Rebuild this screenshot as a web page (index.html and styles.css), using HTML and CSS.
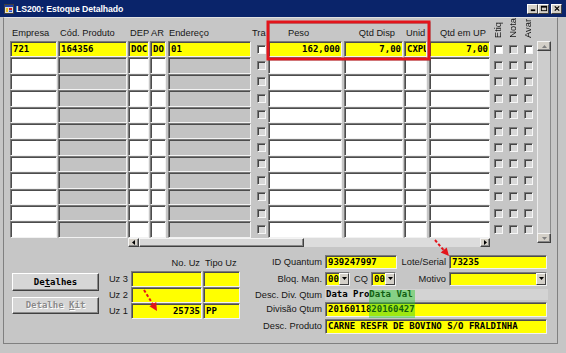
FILE: index.html
```html
<!DOCTYPE html>
<html lang="pt">
<head>
<meta charset="utf-8">
<title>LS200: Estoque Detalhado</title>
<link rel="stylesheet" href="styles.css">
</head>
<body>
<div class="win">
  <div class="titlebar">
    <svg class="ticon" viewBox="0 0 10 10"><rect x="0.5" y="0.5" width="9" height="9" fill="#dcdcdc" stroke="#404040"/><rect x="1" y="1" width="8" height="2" fill="#1e3ea8"/><rect x="2" y="4" width="2" height="4" fill="#e8c020"/><rect x="5" y="4" width="3" height="2" fill="#d02020"/><rect x="5" y="6.5" width="3" height="1.5" fill="#2050d0"/></svg>
    <span class="ttext">LS200: Estoque Detalhado</span>
    <div class="tbtns">
      <span class="tb"><svg viewBox="0 0 9 8" width="9" height="8"><rect x="2" y="5" width="5" height="2" fill="#000"/></svg></span>
      <span class="tb"><svg viewBox="0 0 9 8" width="9" height="8"><rect x="1.5" y="1.5" width="6" height="5" fill="none" stroke="#000"/><rect x="1" y="1" width="7" height="2" fill="#000"/></svg></span>
      <span class="tb close"><svg viewBox="0 0 9 8" width="9" height="8"><path d="M2 1.5l5 5M7 1.5l-5 5" stroke="#000" stroke-width="1.4"/></svg></span>
    </div>
  </div>

  <div class="client">
    <div class="top">
      <div class="table">
        <div class="hdr">
          <span class="h c-emp">Empresa</span>
          <span class="h c-cod">Cód. Produto</span>
          <span class="h c-dep">DEP</span>
          <span class="h c-ar">AR</span>
          <span class="h c-end">Endereço</span>
          <span class="h c-tra">Tra</span>
          <span class="h c-peso pl">Peso</span>
          <span class="h c-qd hr">Qtd Disp</span>
          <span class="h c-un">Unid</span>
          <span class="h c-qup pq">Qtd em UP</span>
          <span class="c-cb vh"><span class="vt">Etiq</span><span class="vt">Nota</span><span class="vt">Avar</span></span>
        </div>
        <div class="rows">
          <div class="row">
            <div class="f y c-emp">721</div>
            <div class="f y c-cod">164356</div>
            <div class="f y c-dep">DOC</div>
            <div class="f y c-ar">DO</div>
            <div class="f y c-end">01</div>
            <div class="c-tra"><span class="chk w"></span></div>
            <div class="f y c-peso r">162,000</div>
            <div class="f y c-qd r">7,00</div>
            <div class="f y c-un">CXPU</div>
            <div class="f y c-qup r">7,00</div>
            <div class="c-cb"><span class="chk w"></span><span class="chk"></span><span class="chk w"></span></div>
          </div>
          <div class="row"><div class="f c-emp"></div><div class="f g c-cod"></div><div class="f c-dep"></div><div class="f c-ar"></div><div class="f g c-end"></div><div class="c-tra"><span class="chk"></span></div><div class="f c-peso"></div><div class="f c-qd"></div><div class="f c-un"></div><div class="f c-qup"></div><div class="c-cb"><span class="chk"></span><span class="chk"></span><span class="chk"></span></div></div>
          <div class="row"><div class="f c-emp"></div><div class="f g c-cod"></div><div class="f c-dep"></div><div class="f c-ar"></div><div class="f g c-end"></div><div class="c-tra"><span class="chk"></span></div><div class="f c-peso"></div><div class="f c-qd"></div><div class="f c-un"></div><div class="f c-qup"></div><div class="c-cb"><span class="chk"></span><span class="chk"></span><span class="chk"></span></div></div>
          <div class="row"><div class="f c-emp"></div><div class="f g c-cod"></div><div class="f c-dep"></div><div class="f c-ar"></div><div class="f g c-end"></div><div class="c-tra"><span class="chk"></span></div><div class="f c-peso"></div><div class="f c-qd"></div><div class="f c-un"></div><div class="f c-qup"></div><div class="c-cb"><span class="chk"></span><span class="chk"></span><span class="chk"></span></div></div>
          <div class="row"><div class="f c-emp"></div><div class="f g c-cod"></div><div class="f c-dep"></div><div class="f c-ar"></div><div class="f g c-end"></div><div class="c-tra"><span class="chk"></span></div><div class="f c-peso"></div><div class="f c-qd"></div><div class="f c-un"></div><div class="f c-qup"></div><div class="c-cb"><span class="chk"></span><span class="chk"></span><span class="chk"></span></div></div>
          <div class="row"><div class="f c-emp"></div><div class="f g c-cod"></div><div class="f c-dep"></div><div class="f c-ar"></div><div class="f g c-end"></div><div class="c-tra"><span class="chk"></span></div><div class="f c-peso"></div><div class="f c-qd"></div><div class="f c-un"></div><div class="f c-qup"></div><div class="c-cb"><span class="chk"></span><span class="chk"></span><span class="chk"></span></div></div>
          <div class="row"><div class="f c-emp"></div><div class="f g c-cod"></div><div class="f c-dep"></div><div class="f c-ar"></div><div class="f g c-end"></div><div class="c-tra"><span class="chk"></span></div><div class="f c-peso"></div><div class="f c-qd"></div><div class="f c-un"></div><div class="f c-qup"></div><div class="c-cb"><span class="chk"></span><span class="chk"></span><span class="chk"></span></div></div>
          <div class="row"><div class="f c-emp"></div><div class="f g c-cod"></div><div class="f c-dep"></div><div class="f c-ar"></div><div class="f g c-end"></div><div class="c-tra"><span class="chk"></span></div><div class="f c-peso"></div><div class="f c-qd"></div><div class="f c-un"></div><div class="f c-qup"></div><div class="c-cb"><span class="chk"></span><span class="chk"></span><span class="chk"></span></div></div>
          <div class="row"><div class="f c-emp"></div><div class="f g c-cod"></div><div class="f c-dep"></div><div class="f c-ar"></div><div class="f g c-end"></div><div class="c-tra"><span class="chk"></span></div><div class="f c-peso"></div><div class="f c-qd"></div><div class="f c-un"></div><div class="f c-qup"></div><div class="c-cb"><span class="chk"></span><span class="chk"></span><span class="chk"></span></div></div>
          <div class="row"><div class="f c-emp"></div><div class="f g c-cod"></div><div class="f c-dep"></div><div class="f c-ar"></div><div class="f g c-end"></div><div class="c-tra"><span class="chk"></span></div><div class="f c-peso"></div><div class="f c-qd"></div><div class="f c-un"></div><div class="f c-qup"></div><div class="c-cb"><span class="chk"></span><span class="chk"></span><span class="chk"></span></div></div>
          <div class="row"><div class="f c-emp"></div><div class="f g c-cod"></div><div class="f c-dep"></div><div class="f c-ar"></div><div class="f g c-end"></div><div class="c-tra"><span class="chk"></span></div><div class="f c-peso"></div><div class="f c-qd"></div><div class="f c-un"></div><div class="f c-qup"></div><div class="c-cb"><span class="chk"></span><span class="chk"></span><span class="chk"></span></div></div>
          <div class="row"><div class="f c-emp"></div><div class="f g c-cod"></div><div class="f c-dep"></div><div class="f c-ar"></div><div class="f g c-end"></div><div class="c-tra"><span class="chk"></span></div><div class="f c-peso"></div><div class="f c-qd"></div><div class="f c-un"></div><div class="f c-qup"></div><div class="c-cb"><span class="chk"></span><span class="chk"></span><span class="chk"></span></div></div>
        </div>
        <div class="hscroll">
          <span class="sbtn"><svg width="3" height="5" viewBox="0 0 3 5"><path d="M3 0v5L0 2.5z" fill="#000"/></svg></span>
          <span class="thumb"></span>
          <span class="htrack"></span>
          <span class="sbtn"><svg width="3" height="5" viewBox="0 0 3 5"><path d="M0 0v5L3 2.5z" fill="#000"/></svg></span>
        </div>
      </div>
      <div class="vscroll">
        <span class="vbtn"><svg width="5" height="3" viewBox="0 0 5 3"><path d="M0 3h5L2.5 0z" fill="#808080"/></svg></span>
        <span class="vtrack"></span>
        <span class="vbtn"><svg width="5" height="3" viewBox="0 0 5 3"><path d="M0 0h5L2.5 3z" fill="#808080"/></svg></span>
      </div>
    </div>

    <div class="bottom">
      <div class="blkA">
        <div class="btn">De<u>t</u>alhes</div>
        <div class="btn dis">Detalhe&nbsp;<u>K</u>it</div>
      </div>
      <div class="blkB">
        <div class="uzh"><span class="uzhl1">No. Uz</span><span class="uzhl2">Tipo Uz</span></div>
        <div class="uzr"><span class="uzl">Uz 3</span><div class="f y uzf1"></div><div class="f y uzf2"></div></div>
        <div class="uzr"><span class="uzl">Uz 2</span><div class="f y uzf1"></div><div class="f y uzf2"></div></div>
        <div class="uzr"><span class="uzl">Uz 1</span><div class="f y uzf1 r">25735</div><div class="f y uzf2">PP</div></div>
      </div>
      <div class="blkC">
        <div class="fr h14">
          <span class="lbl">ID Quantum</span>
          <div class="f y w72">939247997</div>
          <span class="lbl2">Lote/Serial</span>
          <div class="f y w98">73235</div>
        </div>
        <div class="fr h14">
          <span class="lbl">Bloq. Man.</span>
          <div class="f y sel w25"><span class="sv">00</span><span class="dd"><svg width="5" height="3" viewBox="0 0 5 3"><path d="M0 0h5L2.5 3z" fill="#000"/></svg></span></div>
          <span class="lblcq">CQ</span>
          <div class="f y sel w25"><span class="sv">00</span><span class="dd"><svg width="5" height="3" viewBox="0 0 5 3"><path d="M0 0h5L2.5 3z" fill="#000"/></svg></span></div>
          <span class="lbl3">Motivo</span>
          <div class="f y sel w98"><span class="sv"></span><span class="dd"><svg width="5" height="3" viewBox="0 0 5 3"><path d="M0 0h5L2.5 3z" fill="#000"/></svg></span></div>
        </div>
        <div class="fr h12">
          <span class="lbl">Desc. Div. Qtum</span>
          <div class="disp">Data ProData Val</div>
        </div>
        <div class="fr h15 mb2">
          <span class="lbl">Divisão Qtum</span>
          <div class="f y w222">2016011820160427</div>
        </div>
        <div class="fr h15">
          <span class="lbl">Desc. Produto</span>
          <div class="f y w222">CARNE RESFR DE BOVINO S/O FRALDINHA</div>
        </div>
      </div>
      <div class="hl"></div>
    </div>
  </div>

  <svg class="annot" width="566" height="353" viewBox="0 0 566 353">
    <rect x="269" y="23" width="161" height="37" fill="none" stroke="rgba(0,90,90,0.25)" stroke-width="2"/>
    <rect x="268" y="22" width="161" height="37" fill="none" stroke="#e3141b" stroke-width="3"/>
    <line x1="435" y1="240" x2="444" y2="250.5" stroke="#e3141b" stroke-width="2" stroke-dasharray="3 2"/>
    <polygon points="449,256 446.7,247.4 440.7,252.6" fill="#e3141b"/>
    <line x1="144" y1="290" x2="153" y2="304.5" stroke="#e3141b" stroke-width="2" stroke-dasharray="3 2"/>
    <polygon points="157,311 156.2,302.1 149.4,306.3" fill="#e3141b"/>
  </svg>
</div>
</body>
</html>
```

FILE: styles.css
```css
* { box-sizing: border-box; margin: 0; padding: 0; }
html, body { width: 566px; height: 353px; overflow: hidden; }
body {
  background: #c6c6c6;
  font-family: "Liberation Sans", Arial, sans-serif;
  font-size: 9.3px;
  color: #161616;
}
.win { width: 566px; height: 353px; position: relative; background: #c6c6c6; }

/* title bar */
.titlebar {
  height: 17px;
  background: #0a246a;
  display: flex;
  align-items: center;
  padding-left: 4px;
  color: #fff;
}
.ticon { width: 10px; height: 10px; margin-right: 2px; flex: none; }
.ttext { font-weight: bold; font-size: 8.7px; flex: 1; letter-spacing: -0.1px; }
.tbtns { display: flex; margin-right: 4px; }
.tb {
  width: 11px; height: 10px;
  background: #d4d0c8;
  border: 1px solid;
  border-color: #fff #404040 #404040 #fff;
  display: flex; align-items: center; justify-content: center;
}
.tb svg { width: 8px; height: 7px; }
.tb.close { margin-left: 2px; }

/* client */
.client {
  margin-left: 3px;
  width: 555px;
  height: 327px;
  border: 1px solid #808080;
  border-top-color: #e2e2e2;
}
.top { display: flex; }
.table { width: 533px; }

/* columns */
.c-emp { width: 47px; flex: none; }
.c-cod { width: 69px; margin-left: 1px; flex: none; }
.c-dep { width: 21px; margin-left: 1px; flex: none; }
.c-ar { width: 16px; margin-left: 1px; flex: none; }
.c-end { width: 83px; margin-left: 2px; flex: none; }
.c-tra { width: 17px; flex: none; }
.c-peso { width: 74px; flex: none; }
.c-qd { width: 59px; margin-left: 2px; flex: none; }
.c-un { width: 23px; margin-left: 1px; flex: none; }
.c-qup { width: 61px; margin-left: 2px; flex: none; }
.c-cb { width: 47px; flex: none; }

/* header */
.hdr {
  height: 23px;
  display: flex;
  align-items: flex-end;
  padding-left: 6px;
  padding-bottom: 2px;
}
.h { line-height: 11px; white-space: nowrap; overflow: hidden; padding-left: 2px; }
.c-ar.h, .c-end.h, .c-tra.h { padding-left: 1px; }
.h.pl { padding-left: 20px; }
.h.hr { text-align: right; padding-right: 8px; }
.h.pq { padding-left: 11px; }
.vh { display: flex; align-items: flex-end; padding-bottom: 1px; }
.vt {
  writing-mode: vertical-rl;
  transform: rotate(180deg);
  width: 11px;
  line-height: 11px;
  margin-left: 4px;
}
.vt:first-child { margin-left: 3px; }

/* rows */
.rows {
  display: grid;
  grid-template-rows: repeat(12, 16.4px);
  padding-left: 6px;
}
.row { display: flex; }
.f {
  height: 100%;
  border: 1px solid;
  border-color: #7a7a7a #f2f2f2 #f2f2f2 #7a7a7a;
  box-shadow: inset 1px 1px 0 #4c4c4c;
  background: #fff;
  overflow: hidden;
  white-space: nowrap;
  font: bold 9px "DejaVu Sans Mono", "Liberation Mono", monospace;
  color: #000;
  padding: 0 1px 0 2px;
  display: flex;
  align-items: center;
}
.f.g { background: #c3c3c3; }
.f.y { background: #ffff00; }
.f.r { justify-content: flex-end; padding-right: 1px; }

.c-tra { display: flex; align-items: center; padding-left: 6px; }
.row .c-cb { display: flex; align-items: center; padding-left: 4px; gap: 6px; }
.chk {
  width: 9px; height: 9px; flex: none;
  border: 1px solid;
  border-color: #7a7a7a #f6f6f6 #f6f6f6 #7a7a7a;
  box-shadow: inset 1px 1px 0 #444;
  background: #d8d8d8;
}
.chk.w { background: #fff; }

/* scrollbars */
.hscroll { margin-left: 124px; width: 362px; height: 9px; display: flex; }
.sbtn, .vbtn, .thumb {
  background: #d4d0c8;
  border: 1px solid;
  border-color: #f4f4f4 #404040 #404040 #f4f4f4;
  box-shadow: inset -1px -1px 0 #888;
  display: flex; align-items: center; justify-content: center;
}
.sbtn { width: 11px; flex: none; }
.sbtn:last-child { width: 10px; }
.thumb { width: 165px; flex: none; background: #d8d8d8; }
.htrack { flex: 1; background: #dcdcdc; }

.vscroll {
  margin-top: 23px;
  width: 14px;
  height: 202px;
  display: flex;
  flex-direction: column;
}
.vbtn { height: 10px; flex: none; }
.vtrack { flex: 1; background: #cdcdcd; border-left: 1px solid #ededed; border-right: 1px solid #8a8a8a; }

/* bottom */
.bottom { height: 96px; display: flex; position: relative; }
.blkA {
  width: 95px; flex: none;
  padding: 26px 0 0 8px;
  display: flex; flex-direction: column; gap: 6px;
}
.btn {
  width: 87px; height: 18px;
  background: #d6d6d6;
  border: 1px solid;
  border-color: #fff #404040 #404040 #fff;
  box-shadow: inset -1px -1px 0 #8a8a8a;
  display: flex; align-items: center; justify-content: center;
  font: bold 9px "DejaVu Sans Mono", "Liberation Mono", monospace;
  color: #000;
  white-space: pre;
}
.btn.dis { height: 17px; color: #8a8a8a; text-shadow: 1px 1px 0 #fff; }

.blkB { width: 141px; flex: none; padding-top: 8px; }
.uzh { height: 16px; display: flex; align-items: center; padding-left: 32px; }
.uzhl1 { width: 71px; text-align: right; padding-right: 2px; }
.uzhl2 { padding-left: 3px; }
.uzr { display: flex; height: 16px; }
.uzl { width: 32px; text-align: right; padding-right: 3px; line-height: 16px; }
.uzf1 { width: 71px; flex: none; }
.uzf2 { width: 37px; margin-left: 1px; flex: none; }

.blkC { width: 308px; flex: none; padding-top: 8px; display: flex; flex-direction: column; gap: 3px; }
.fr { display: flex; align-items: center; }
.fr.h14 { height: 14px; }
.fr.h12 { height: 12px; margin-bottom: -2px; }
.fr.h15 { height: 15px; }
.fr.mb2 { margin-bottom: -1px; }
.lbl { width: 85px; flex: none; text-align: right; padding-right: 3px; white-space: nowrap; }
.lbl2 { width: 52px; flex: none; text-align: right; padding-right: 3px; }
.lblcq { width: 21px; flex: none; text-align: right; padding-right: 3px; }
.lbl3 { width: 53px; flex: none; text-align: right; padding-right: 3px; }
.w72 { width: 72px; flex: none; }
.w98 { width: 98px; flex: none; }
.w25 { width: 25px; flex: none; }
.w222 { width: 222px; flex: none; }
.sel { padding: 0 0 0 2px; }
.sv { flex: 1; }
.dd {
  width: 10px; height: 100%; flex: none;
  background: #d4d0c8;
  border: 1px solid;
  border-color: #fff #404040 #404040 #fff;
  display: flex; align-items: center; justify-content: center;
}
.disp {
  width: 223px; height: 11px;
  background: #d3d3d3;
  font: bold 9px/11px "DejaVu Sans Mono", "Liberation Mono", monospace;
  color: #000;
  padding-left: 1px;
}
.hl {
  position: absolute;
  left: 365px; top: 43px;
  width: 46px; height: 28px;
  background: rgba(40, 205, 40, 0.45);
}

.annot { position: absolute; left: 0; top: 0; pointer-events: none; }
```
